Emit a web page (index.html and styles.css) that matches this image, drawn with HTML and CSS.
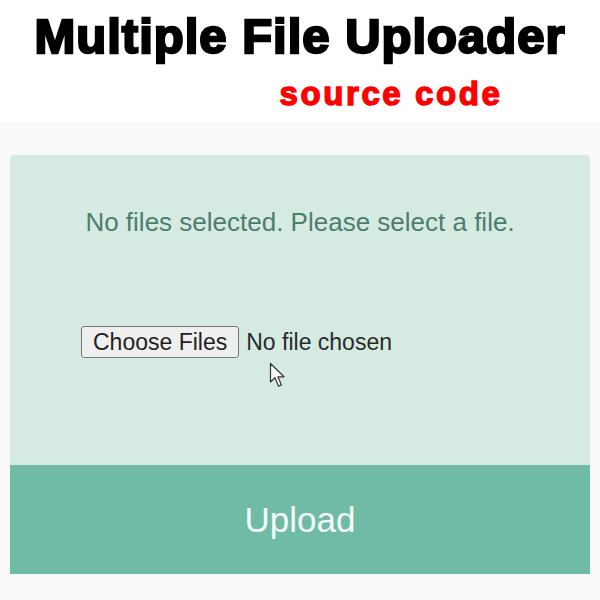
FILE: index.html
```html
<!DOCTYPE html>
<html lang="en">
<head>
<meta charset="utf-8">
<title>Multiple File Uploader</title>
<link rel="stylesheet" href="styles.css">
</head>
<body>
<header class="banner">
  <h1 class="title">Multiple File Uploader</h1>
  <p class="subtitle">source code</p>
</header>
<main class="stage">
  <section class="uploader">
    <div class="drop">
      <p class="message">No files selected. Please select a file.</p>
      <div class="picker">
        <span class="choose">Choose Files</span>
        <span class="chosen">No file chosen</span>
        <svg class="cursor" width="18" height="27" viewBox="0 0 18 27">
          <path d="M1.5 1.5 L1.5 20 L6 15.8 L9.6 24.2 L12.4 23 L8.9 14.8 L15 14.8 Z" fill="#ffffff" stroke="#3a3a3a" stroke-width="1.3" stroke-linejoin="round"/>
        </svg>
      </div>
    </div>
    <button class="upload" type="button">Upload</button>
  </section>
</main>
</body>
</html>
```
FILE: styles.css
```css
html, body {
  margin: 0;
  padding: 0;
}
body {
  width: 600px;
  height: 600px;
  overflow: hidden;
  background: #f9f9fb;
  font-family: "Liberation Sans", Arial, sans-serif;
}
.banner {
  background: #ffffff;
  height: 122px;
  display: flex;
  flex-direction: column;
  align-items: center;
}
.title {
  margin: 8px 0 0;
  font-size: 49px;
  line-height: 56px;
  font-weight: 700;
  color: #000;
  -webkit-text-stroke: 2.4px #000;
  letter-spacing: 1px;
}
.subtitle {
  margin: 12px 0 0 182px;
  font-size: 33px;
  line-height: 36px;
  font-weight: 700;
  color: #ff0000;
  -webkit-text-stroke: 1.4px #ff0000;
  letter-spacing: 2.6px;
}
.stage {
  padding: 33px 10px 0;
}
.uploader {
  border-radius: 4px 4px 0 0;
  overflow: hidden;
}
.drop {
  background: #d5ebe2;
  height: 310px;
  display: flex;
  flex-direction: column;
  align-items: center;
}
.message {
  margin: 52px 0 0;
  font-size: 26px;
  line-height: 30px;
  color: #4d7d6e;
}
.picker {
  position: relative;
  align-self: flex-start;
  margin: 89px 0 0 71px;
  display: flex;
  align-items: center;
  gap: 7px;
  font-size: 23px;
  color: #222;
}
.choose {
  box-sizing: border-box;
  height: 32px;
  padding: 0 11px;
  display: flex;
  align-items: center;
  background: #efefef;
  border: 1.5px solid #767676;
  border-radius: 3px;
  color: #1f1f1f;
}
.chosen {
  color: #2a2a2a;
}
.cursor {
  position: absolute;
  left: 188px;
  top: 36px;
}
.upload {
  display: block;
  width: 100%;
  height: 109px;
  border: 0;
  margin: 0;
  background: #6fbba5;
  color: #f4fbf8;
  font-family: "Liberation Sans", Arial, sans-serif;
  font-size: 35px;
  padding: 0;
}
```
